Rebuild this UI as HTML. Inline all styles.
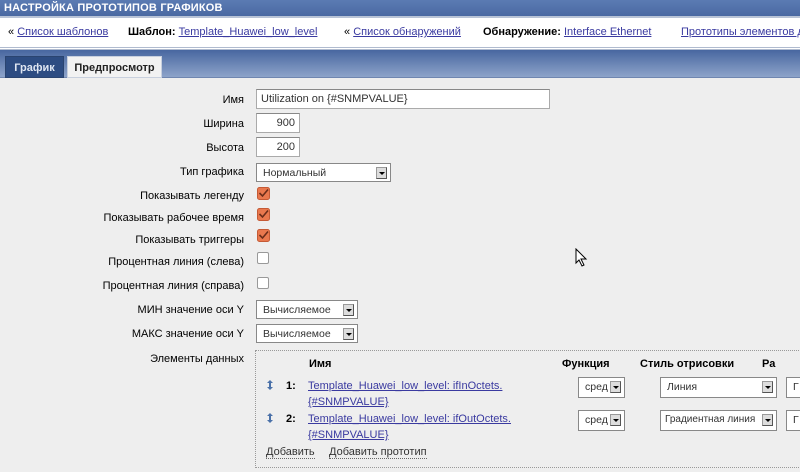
<!DOCTYPE html>
<html><head><meta charset="utf-8"><style>
*{margin:0;padding:0;box-sizing:border-box}
body{width:800px;height:472px;overflow:hidden;background:#eeeeee;font-family:"Liberation Sans","DejaVu Sans",sans-serif;font-size:11px;color:#000;position:relative}
.a{position:absolute;white-space:nowrap}
#hdr{left:0;top:0;width:800px;height:16px;background:linear-gradient(#5b7bb3,#4a69a2);color:#fff;font-weight:bold;font-size:11px;padding:2px 0 0 4px;letter-spacing:.2px}
#bc{left:0;top:16px;width:800px;height:34px;background:#fff;border-top:2px solid #b8c3d6;border-bottom:3px double #b0bbcf}
a{color:#3a3aa0;text-decoration:underline}
#tabs{left:0;top:50px;width:800px;height:28px;background:linear-gradient(#4867a0,#8da3c9);border-bottom:1px solid #6f86b0}
.tab{position:absolute;top:6px;height:22px;font-weight:bold;padding:5px 0 0 0;text-align:center}
.lbl{position:absolute;right:556px;white-space:nowrap}
.inp{position:absolute;background:#fff;border:1px solid #aaa;border-top-color:#888;height:20px;padding:3px 4px;color:#333}
.sel{position:absolute;background:#fff;border:1px solid #888;height:19px;padding:3px 6px;color:#333;font-size:10.5px;overflow:hidden}
.sel i{position:absolute;right:3px;top:3px;width:11px;height:12px;background:#ddd;border:1px solid #999;border-right-color:#555;border-bottom-color:#555}
.sel i:after{content:"";position:absolute;left:2px;top:4px;border-left:3px solid transparent;border-right:3px solid transparent;border-top:3px solid #000}
.cb{position:absolute;left:257px;width:12px;height:12px;border-radius:2px}
.off{background:#fff;border:1px solid #999}
#box{left:255px;top:350px;width:560px;height:118px;border:1px dotted #999}
</style></head><body>
<div id="hdr" class="a">НАСТРОЙКА ПРОТОТИПОВ ГРАФИКОВ</div>
<div id="bc" class="a">
<div class="a" style="left:8px;top:8px">« <a>Список шаблонов</a></div>
<div class="a" style="left:128px;top:8px"><b>Шаблон:</b> <a>Template_Huawei_low_level</a></div>
<div class="a" style="left:344px;top:8px">« <a>Список обнаружений</a></div>
<div class="a" style="left:483px;top:8px"><b>Обнаружение:</b> <a>Interface Ethernet</a></div>
<div class="a" style="left:681px;top:8px"><a>Прототипы элементов данных</a></div>
</div>
<div id="tabs" class="a">
<div class="tab" style="left:5px;width:59px;background:#2d4c82;color:#dfe6f2;border:1px solid #2a4470">График</div>
<div class="tab" style="left:67px;width:95px;background:#f2f2f2;color:#222;border:1px solid #c8d0de">Предпросмотр</div>
</div>

<div class="lbl" style="top:94px">Имя</div>
<div class="inp" style="left:256px;top:89px;width:294px">Utilization on {#SNMPVALUE}</div>
<div class="lbl" style="top:118px">Ширина</div>
<div class="inp" style="left:256px;top:113px;width:44px;text-align:right">900</div>
<div class="lbl" style="top:142px">Высота</div>
<div class="inp" style="left:256px;top:137px;width:44px;text-align:right">200</div>
<div class="lbl" style="top:166px">Тип графика</div>
<div class="sel" style="left:256px;top:163px;width:135px">Нормальный<i></i></div>

<div class="lbl" style="top:190px">Показывать легенду</div>
<div class="lbl" style="top:212px">Показывать рабочее время</div>
<div class="lbl" style="top:234px">Показывать триггеры</div>
<svg class="a" style="left:257px;top:187px" width="13" height="56" viewBox="0 0 13 56">
<g fill="#e9784e" stroke="#c55a35"><rect x="0.5" y="0.5" width="12" height="12" rx="2"/><rect x="0.5" y="21.5" width="12" height="12" rx="2"/><rect x="0.5" y="42.5" width="12" height="12" rx="2"/></g>
<g fill="none" stroke="#6a2d1a" stroke-width="1.6"><path d="M2.5 6 L5.5 9 L11 2.5"/><path d="M2.5 27 L5.5 30 L11 23.5"/><path d="M2.5 48 L5.5 51 L11 44.5"/></g></svg>
<div class="lbl" style="top:256px">Процентная линия (слева)</div><div class="cb off" style="top:252px"></div>
<div class="lbl" style="top:280px">Процентная линия (справа)</div><div class="cb off" style="top:277px"></div>
<div class="lbl" style="top:304px">МИН значение оси Y</div>
<div class="sel" style="left:256px;top:300px;width:102px">Вычисляемое<i></i></div>
<div class="lbl" style="top:328px">МАКС значение оси Y</div>
<div class="sel" style="left:256px;top:324px;width:102px">Вычисляемое<i></i></div>
<div class="lbl" style="top:353px">Элементы данных</div>

<div id="box" class="a"></div>
<div class="a" style="left:309px;top:358px;font-weight:bold">Имя</div>
<div class="a" style="left:562px;top:358px;font-weight:bold">Функция</div>
<div class="a" style="left:640px;top:358px;font-weight:bold">Стиль отрисовки</div>
<div class="a" style="left:762px;top:358px;font-weight:bold">Ра</div>

<svg class="a" style="left:267px;top:380px" width="6" height="44" viewBox="0 0 6 44"><g fill="#4a70a8"><path d="M3 0 L6 3 L4 3 L4 7 L6 7 L3 10 L0 7 L2 7 L2 3 L0 3Z"/><path d="M3 33 L6 36 L4 36 L4 40 L6 40 L3 43 L0 40 L2 40 L2 36 L0 36Z"/></g></svg>
<div class="a" style="left:286px;top:380px;font-weight:bold">1:</div>
<div class="a" style="left:308px;top:380px"><a>Template_Huawei_low_level: ifInOctets.</a></div>
<div class="a" style="left:308px;top:396px"><a>{#SNMPVALUE}</a></div>
<div class="sel" style="left:578px;top:377px;width:47px;height:21px">сред<i></i></div>
<div class="sel" style="left:660px;top:377px;width:117px;height:21px">Линия<i></i></div>
<div class="sel" style="left:786px;top:377px;width:30px;height:21px">Г</div>

<div class="a" style="left:286px;top:413px;font-weight:bold">2:</div>
<div class="a" style="left:308px;top:413px"><a>Template_Huawei_low_level: ifOutOctets.</a></div>
<div class="a" style="left:308px;top:429px"><a>{#SNMPVALUE}</a></div>
<div class="sel" style="left:578px;top:410px;width:47px;height:21px">сред<i></i></div>
<div class="sel" style="left:660px;top:410px;width:117px;height:21px;padding-left:4px;font-size:10px">Градиентная линия<i></i></div>
<div class="sel" style="left:786px;top:410px;width:30px;height:21px">Г</div>

<div class="a" style="left:266px;top:446px;color:#333;border-bottom:1px dotted #666">Добавить</div>
<div class="a" style="left:329px;top:446px;color:#333;border-bottom:1px dotted #666">Добавить прототип</div>

<svg class="a" style="left:575px;top:248px" width="14" height="20" viewBox="0 0 14 20"><path d="M1 1 L1 15 L4 12 L7 18 L9 17 L6 11 L11 11 Z" fill="#fff" stroke="#000" stroke-width="1"/></svg>
</body></html>
